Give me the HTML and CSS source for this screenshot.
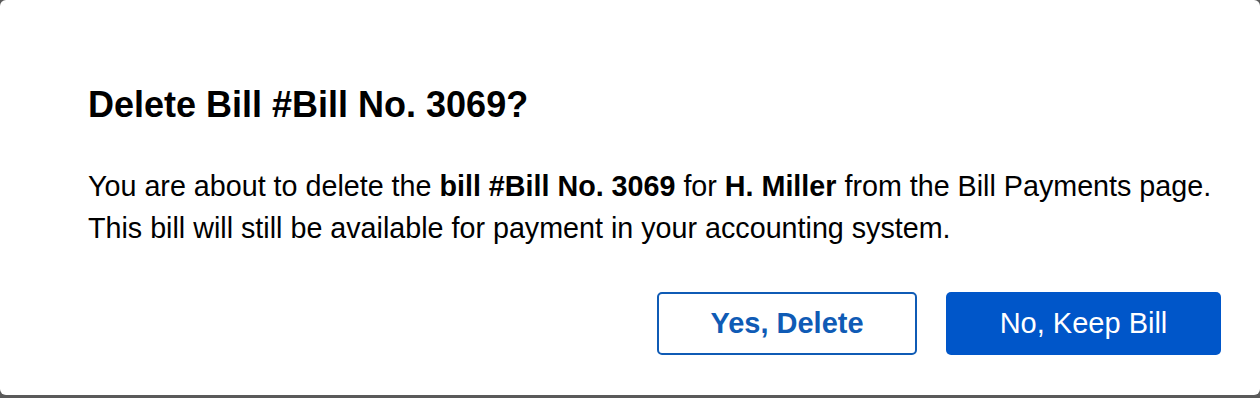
FILE: index.html
```html
<!DOCTYPE html>
<html lang="en">
<head>
  <meta charset="UTF-8" />
  <title>Delete Bill</title>
  <meta name="viewport" content="width=device-width, initial-scale=1.0">
  <link rel="stylesheet" href="styles.css">
</head>
<body>

  <!-- Dialogo de confirmacion -->
  <div class="modal" role="dialog" aria-labelledby="modal-title">
    <h2 class="modal-title" id="modal-title">Delete Bill #Bill No. 3069?</h2>

    <p class="modal-text">
      You are about to delete the <b>bill #Bill No. 3069</b> for <b>H. Miller</b> from the Bill Payments page.<br>
      This bill will still be available for payment in your accounting system.
    </p>

    <div class="modal-actions">
      <button class="btn btn-outline">Yes, Delete</button>
      <button class="btn btn-primary">No, Keep Bill</button>
    </div>
  </div>

</body>
</html>
```

FILE: styles.css
```css
html, body {
  margin: 0;
  padding: 0;
  height: 100%;
  overflow: hidden;
  background: #5a5a5a;
}

.modal {
  box-sizing: border-box;
  height: 395px;
  background: #fff;
  border-radius: 6px;
  padding: 85px 39px 0 88px;
  font-family: "Liberation Sans", Arial, sans-serif;
  color: #000;
}

.modal-title {
  margin: 0;
  font-size: 36px;
  line-height: 40px;
  font-weight: bold;
}

.modal-text {
  margin: 40px 0 0;
  font-size: 28.7px;
  line-height: 42px;
  white-space: nowrap;
}

.modal-actions {
  display: flex;
  justify-content: flex-end;
  gap: 29px;
  margin-top: 43px;
}

.btn {
  box-sizing: border-box;
  height: 63px;
  border-radius: 5px;
  font-family: "Liberation Sans", Arial, sans-serif;
  font-size: 29px;
  cursor: pointer;
}

.btn-outline {
  width: 260px;
  background: #fff;
  border: 2px solid #0f5bb5;
  color: #0f5bb5;
  font-weight: bold;
}

.btn-primary {
  width: 275px;
  background: #0056c9;
  border: 0;
  color: #fff;
}
```
